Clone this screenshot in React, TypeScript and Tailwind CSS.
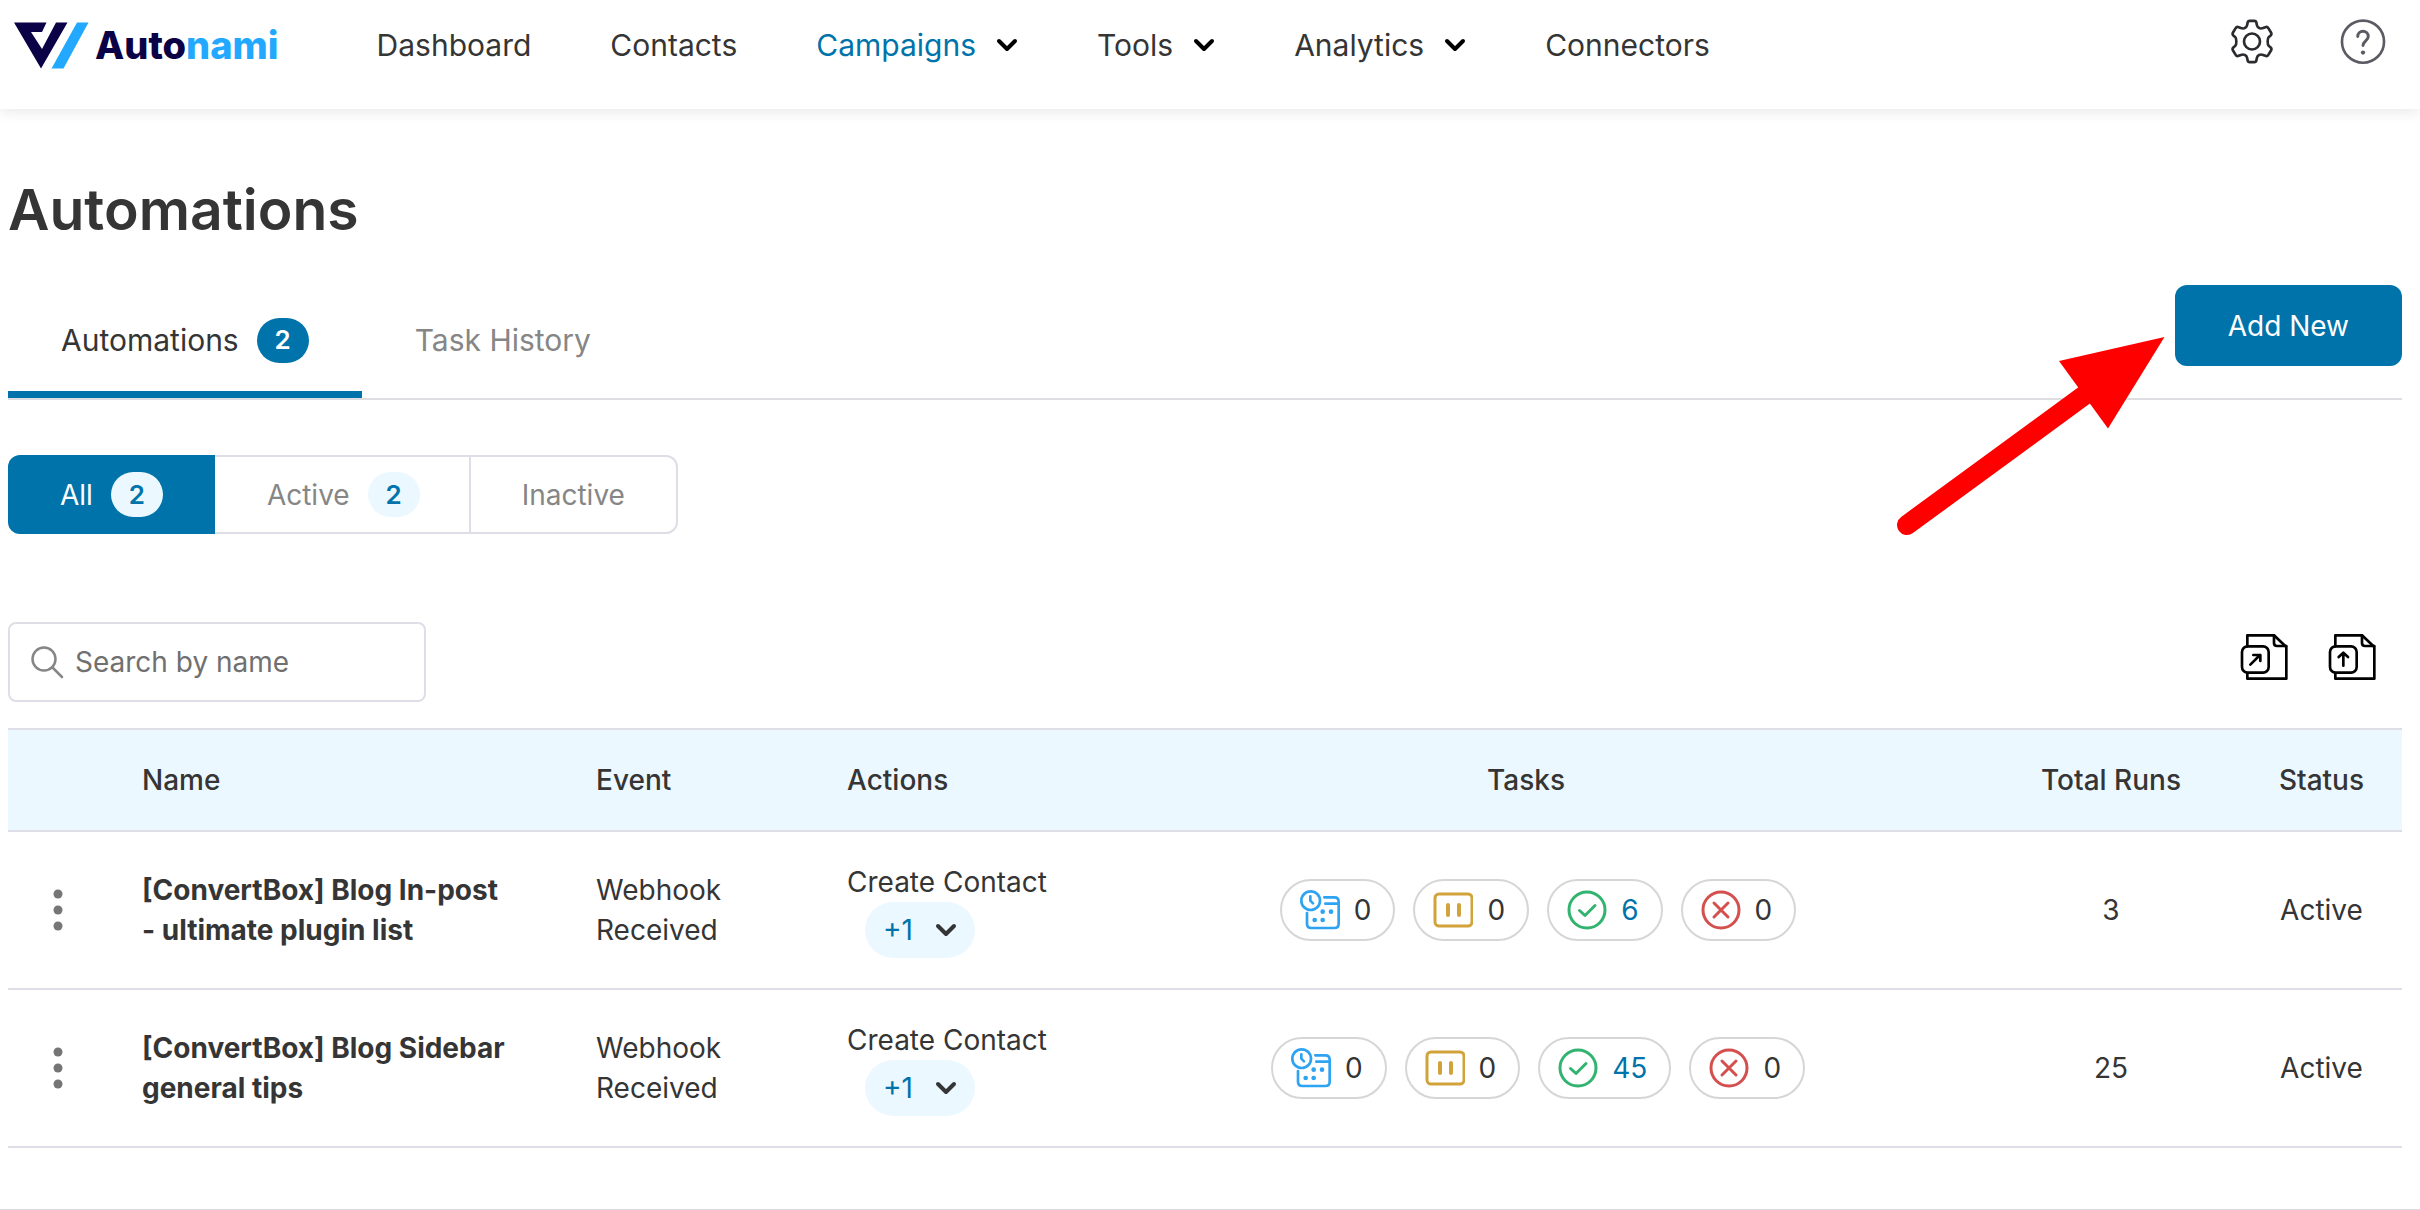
import type { ReactNode } from "react";

function Chevron({ className }: { className: string }) {
  return (
    <svg viewBox="0 0 22 14" className={"h-[14px] w-[22px] " + className} fill="none" stroke="currentColor" strokeWidth="4" strokeLinecap="round" strokeLinejoin="round" aria-hidden="true">
      <path d="M3 3l8 8 8-8" />
    </svg>
  );
}

function LogoMark() {
  return (
    <svg viewBox="13 21 76 47" className="h-[47px] w-[76px]" aria-hidden="true">
      <path d="M14 21.5H46.5L42 31H31L42 48 56 21.5H67.500L41 67.500Z" fill="#0b0146" />
      <path d="M77 21.500H88.500L63.500 67.500H51.500Z" fill="#22a9ff" />
    </svg>
  );
}

function GearIcon() {
  return (
    <svg viewBox="60 58 132 134" className="h-[45px] w-11" fill="none" stroke="#2b2b2f" strokeWidth="8" strokeLinejoin="round" aria-hidden="true">
      <path d="M119 63H133Q138 63 139 68L141 77Q142 82 149 85Q153 87 157 85L166 82Q172 80 175 85L183 98Q186 103 182 107L176 112Q173 115 173 125Q173 135 176 138L182 143Q186 147 183 152L175 165Q172 170 166 168L157 165Q153 163 149 165Q142 168 141 173L139 182Q138 187 133 187H119Q114 187 113 182L111 173Q110 168 103 165Q99 163 95 165L86 168Q80 170 77 165L69 152Q66 147 70 143L76 138Q79 135 79 125Q79 115 76 112L70 107Q66 103 69 98L77 85Q80 80 86 82L95 85Q99 87 103 85Q110 82 111 77L113 68Q114 63 119 63Z" />
      <circle cx="126" cy="125" r="24" />
    </svg>
  );
}

function HelpIcon() {
  return (
    <svg viewBox="390 52 140 140" className="h-[46px] w-[46px]" fill="none" stroke="#5b5b63" strokeWidth="8" strokeLinecap="round" aria-hidden="true">
      <circle cx="460" cy="121" r="64" />
      <path d="M444 105C444 84 476 84 476 105C476 118 460 119 460 133" strokeWidth="9" />
      <circle cx="460" cy="154" r="6.500" fill="#5b5b63" stroke="none" />
    </svg>
  );
}

function FileIcon({ children }: { children: ReactNode }) {
  return (
    <svg viewBox="120 68 144 144" className="h-12 w-12" fill="none" stroke="#000" strokeWidth="8" strokeLinecap="round" strokeLinejoin="round" aria-hidden="true">
      <path d="M142 108V75H222L259 110V205H142V188" />
      <path d="M222 75V98Q222 107 231 107H259" />
      <rect x="126" y="108" width="80" height="79" rx="17" />
      {children}
    </svg>
  );
}

function ScheduledIcon() {
  return (
    <svg viewBox="90 57 120 120" className="h-10 w-10" fill="none" stroke="#2ea3f2" strokeWidth="8" strokeLinecap="round" strokeLinejoin="round" aria-hidden="true">
      <circle cx="122" cy="89" r="28" />
      <path d="M121 76V89L129 97" />
      <path d="M111 126V158Q111 171 124 171H193Q206 171 206 158V92Q206 79 193 79H163M166 98H206" />
      <g fill="#2ea3f2" stroke="none">
        <circle cx="158" cy="122" r="7" />
        <circle cx="183" cy="122" r="7" />
        <circle cx="134" cy="147" r="7" />
        <circle cx="158" cy="147" r="7" />
      </g>
    </svg>
  );
}

function PausedIcon() {
  return (
    <svg viewBox="0 0 40 40" className="h-10 w-10" fill="none" stroke="#d2a33a" strokeWidth="3" aria-hidden="true">
      <rect x="2" y="4" width="37" height="32" rx="4" />
      <path d="M15 15v10M26 15v10" strokeWidth="4" strokeLinecap="round" />
    </svg>
  );
}

function CompletedIcon() {
  return (
    <svg viewBox="0 0 40 40" className="h-10 w-10" fill="none" stroke="#32b36f" strokeWidth="3" strokeLinecap="round" strokeLinejoin="round" aria-hidden="true">
      <circle cx="20" cy="20" r="18" />
      <path d="M12.500 20.500l5.500 5 10-10" />
    </svg>
  );
}

function FailedIcon() {
  return (
    <svg viewBox="0 0 40 40" className="h-10 w-10" fill="none" stroke="#d4504e" strokeWidth="3" strokeLinecap="round" aria-hidden="true">
      <circle cx="20" cy="20" r="18" />
      <path d="M13 13l14 14M27 13L13 27" />
    </svg>
  );
}

function NavItem({ label, menu, active }: { label: string; menu?: boolean; active?: boolean }) {
  return (
    <a href="#" className={"flex items-center gap-5 " + (active ? "text-[#0073aa]" : "")}>
      {label}
      {menu && <Chevron className="text-black" />}
    </a>
  );
}

function Count({ value, className }: { value: number; className: string }) {
  return <span className={"flex h-[45px] w-[52px] items-center justify-center rounded-full text-[26px] font-semibold " + className}>{value}</span>;
}

function TaskPill({ label, icon, value, linked }: { label: string; icon: ReactNode; value: number; linked?: boolean }) {
  return (
    <a href="#" aria-label={label + ": " + value} className={"flex h-[62px] items-center gap-3.5 rounded-full border-2 border-[#d6d6d8] pr-[22px] pl-[18px] " + (linked ? "text-[#0073aa]" : "")}>
      {icon}
      {value}
    </a>
  );
}

const rows = [
  { name: "[ConvertBox] Blog In-post - ultimate plugin list", event: "Webhook Received", tasks: [0, 0, 6, 0], runs: 3 },
  { name: "[ConvertBox] Blog Sidebar general tips", event: "Webhook Received", tasks: [0, 0, 45, 0], runs: 25 },
];

export default function App() {
  return (
    <div className="min-h-screen border-b border-[#dcdce0] bg-white font-[Inter,sans-serif] text-[28px] leading-10 text-[#353535]">
      <header className="flex h-[109px] items-start justify-between pr-[34px] pl-[13px] shadow-[0_2px_14px_rgba(0,0,0,0.10)]">
        <div className="flex h-[90px] items-center">
          <a href="#" className="flex items-center gap-1.5 text-[38px] font-extrabold">
            <LogoMark />
            <span className="text-[#0b0146]">
              Auto<span className="text-[#22a9ff]">nami</span>
            </span>
          </a>
          <nav className="ml-[98px] flex items-center gap-[79px] text-[30px]">
            <NavItem label="Dashboard" />
            <NavItem label="Contacts" />
            <NavItem label="Campaigns" menu active />
            <NavItem label="Tools" menu />
            <NavItem label="Analytics" menu />
            <NavItem label="Connectors" />
          </nav>
        </div>
        <div className="flex h-[83px] items-center gap-[66px]">
          <button type="button" aria-label="Settings"><GearIcon /></button>
          <button type="button" aria-label="Help"><HelpIcon /></button>
        </div>
      </header>

      <main className="pt-[66px] pr-[18px] pl-2">
        <h1 className="text-[57px] leading-[70px] font-semibold">Automations</h1>

        <div className="mt-10 flex items-stretch justify-between border-b-2 border-[#dedee2]">
          <div className="flex" role="tablist">
            <button type="button" role="tab" aria-selected="true" className="flex items-center gap-[18px] border-b-[7px] border-[#0073aa] px-[53px] pt-1 text-[30px]">
              Automations
              <Count value={2} className="bg-[#0073aa] text-white" />
            </button>
            <button type="button" role="tab" aria-selected="false" className="flex items-center border-b-[7px] border-transparent px-[53px] pt-1 text-[30px] text-[#868686]">
              Task History
            </button>
          </div>
          <div className="relative mb-8">
            <button type="button" className="flex h-[81px] items-center rounded-xl bg-[#0073aa] px-[53px] text-white">Add New</button>
            <svg viewBox="1895 335 270 205" className="pointer-events-none absolute top-[50px] right-full mr-2.5 h-[205px] w-[270px] max-w-none" aria-hidden="true">
              <path d="M1907 525L2086 394" stroke="#fe0000" strokeWidth="20" strokeLinecap="round" />
              <path d="M2164.500 337L2059 361 2108 428.500Z" fill="#fe0000" />
            </svg>
          </div>
        </div>

        <div className="mt-[55px] flex h-[79px] w-max text-[#868686]">
          <button type="button" className="flex items-center gap-[18px] rounded-l-xl bg-[#0073aa] px-[52px] text-white">
            All
            <Count value={2} className="bg-[#ecf8ff] text-[#0073aa]" />
          </button>
          <button type="button" className="flex items-center gap-[18px] border-y-2 border-r-2 border-[#dedee6] pr-[49px] pl-[52px]">
            Active
            <Count value={2} className="bg-[#ecf8ff] text-[#0073aa]" />
          </button>
          <button type="button" className="flex items-center rounded-r-xl border-2 border-l-0 border-[#dedee6] px-[51px]">Inactive</button>
        </div>

        <div className="mt-[88px] flex items-center justify-between">
          <label className="flex h-20 w-[418px] items-center gap-[11px] rounded-lg border-2 border-[#dedee6] px-5">
            <svg viewBox="0 0 34 34" className="h-[34px] w-[34px] shrink-0" fill="none" stroke="#868686" strokeWidth="2.500" strokeLinecap="round" aria-hidden="true">
              <circle cx="14" cy="14" r="11.500" />
              <path d="M22.500 22.500L32 32" />
            </svg>
            <input type="text" aria-label="Search by name" placeholder="Search by name" className="w-full min-w-0 outline-none placeholder:text-[#707070]" />
          </label>
          <div className="flex gap-10 pr-[26px] pb-2.5">
            <button type="button" aria-label="Export">
              <FileIcon>
                <path d="M151 163L180 134M160 134H181V152" />
              </FileIcon>
            </button>
            <button type="button" aria-label="Import">
              <FileIcon>
                <path d="M166 166V128M152 140L166 127 180 140" />
              </FileIcon>
            </button>
          </div>
        </div>

        <table className="mt-[26px] w-full table-fixed border-separate border-spacing-0 text-left">
          <colgroup>
            <col className="w-[110px]" />
            <col className="w-[454px]" />
            <col className="w-[251px]" />
            <col className="w-[248px]" />
            <col />
            <col className="w-[260px]" />
            <col className="w-[161px]" />
          </colgroup>
          <thead>
            <tr className="h-[104px] bg-[#ecf8ff] [&>th]:border-y-2 [&>th]:border-[#dedee6] [&>th]:px-6 [&>th]:font-medium">
              <th aria-label="Row menu"></th>
              <th>Name</th>
              <th>Event</th>
              <th>Actions</th>
              <th className="text-center">Tasks</th>
              <th className="text-center">Total Runs</th>
              <th className="text-center">Status</th>
            </tr>
          </thead>
          <tbody>
            {rows.map((row) => (
              <tr key={row.name} className="h-[158px] [&>td]:border-b-2 [&>td]:border-[#dedee6] [&>td]:pl-6">
                <td>
                  <button type="button" aria-label="Options" className="flex h-12 w-13 items-center justify-center">
                    <svg viewBox="0 0 10 42" className="h-[42px] w-[10px]" fill="#757575" aria-hidden="true">
                      <circle cx="5" cy="5" r="4.500" />
                      <circle cx="5" cy="21" r="4.500" />
                      <circle cx="5" cy="37" r="4.500" />
                    </svg>
                  </button>
                </td>
                <td className="pr-14"><a href="#" className="block font-bold">{row.name}</a></td>
                <td className="pr-6">{row.event}</td>
                <td>
                  Create Contact
                  <button type="button" aria-label="Show 1 more action" className="ml-[18px] flex h-[56px] items-center gap-[22px] rounded-full bg-[#ecf8ff] px-[18px] text-[#0073aa]">
                    +1
                    <Chevron className="text-[#353535]" />
                  </button>
                </td>
                <td>
                  <div className="flex justify-center gap-[18px]">
                    <TaskPill label="Scheduled" icon={<ScheduledIcon />} value={row.tasks[0]} />
                    <TaskPill label="Paused" icon={<PausedIcon />} value={row.tasks[1]} />
                    <TaskPill label="Completed" icon={<CompletedIcon />} value={row.tasks[2]} linked />
                    <TaskPill label="Failed" icon={<FailedIcon />} value={row.tasks[3]} />
                  </div>
                </td>
                <td className="pr-6 text-center">{row.runs}</td>
                <td className="pr-6 text-center">Active</td>
              </tr>
            ))}
          </tbody>
        </table>
      </main>
    </div>
  );
}
